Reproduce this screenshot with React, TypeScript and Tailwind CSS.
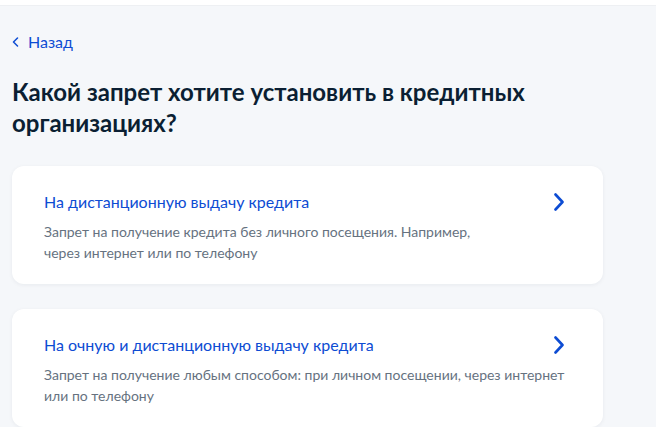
const options = [
  {
    title: "На дистанционную выдачу кредита",
    text: (
      <>
        Запрет на получение кредита без личного посещения. Например,
        <br />
        через интернет или по телефону
      </>
    ),
  },
  {
    title: "На очную и дистанционную выдачу кредита",
    text: <>Запрет на получение любым способом: при личном посещении, через интернет или по телефону</>,
  },
];

function Chevron() {
  return (
    <svg width="12" height="18" viewBox="0 0 12 18" fill="none" className="shrink-0">
      <path d="M2.5 1.5 9.5 9 2.5 16.5" stroke="#0d4cd3" strokeWidth="2.6" strokeLinecap="round" strokeLinejoin="round" />
    </svg>
  );
}

export default function App() {
  return (
    <div className="min-h-screen bg-[#f5f7fa] font-['Lato','Noto_Sans',sans-serif] overflow-hidden">
      {/* header strip */}
      <div className="h-[6px] bg-white border-b border-[#eef0f3]" />

      <div className="pl-3 pr-[53px]">
        <button className="mt-[24px] flex items-center gap-[9px] text-[16px] leading-[24px] text-[#0d4cd3]">
          <svg width="7" height="10" viewBox="0 0 7 10" fill="none">
            <path d="M5.5 1 1.5 5l4 4" stroke="#0d4cd3" strokeWidth="1.5" strokeLinecap="round" strokeLinejoin="round" />
          </svg>
          <span>Назад</span>
        </button>

        <h1 className="mt-[22px] text-[24px] font-bold leading-[31px] text-[#0b1f33]">
          Какой запрет хотите установить в кредитных организациях?
        </h1>

        <div className="mt-[28px] flex flex-col gap-[25px]">
          {options.map((o) => (
            <div
              key={o.title}
              className="rounded-[12px] bg-white pl-8 pr-[38px] pt-[24px] pb-[21px] shadow-[0_1px_4px_rgba(11,31,51,0.06)]"
            >
              <div className="flex items-center justify-between">
                <span className="text-[16px] leading-[24px] text-[#0d4cd3]">{o.title}</span>
                <Chevron />
              </div>
              <p className="mt-[7px] max-w-[530px] text-[14px] leading-[21px] text-[#66727f]">{o.text}</p>
            </div>
          ))}
        </div>
      </div>
    </div>
  );
}
